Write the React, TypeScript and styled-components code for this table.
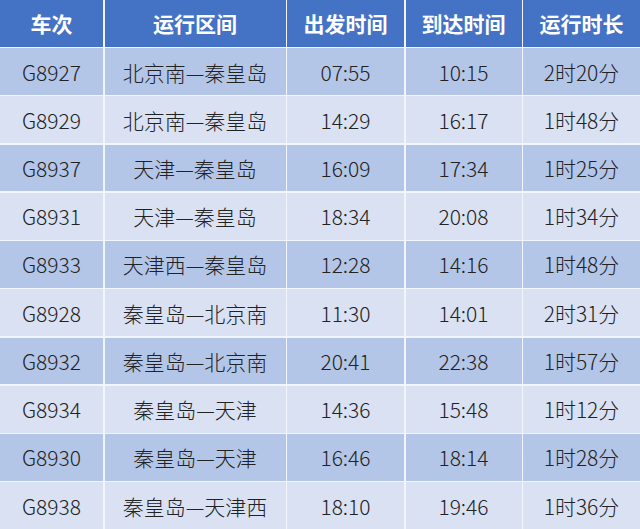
import React from 'react';
import styled, { createGlobalStyle } from 'styled-components';

const GlobalStyle = createGlobalStyle`
  html, body {
    margin: 0;
    padding: 0;
    background: #ffffff;
  }
`;

const COLUMNS = ['车次', '运行区间', '出发时间', '到达时间', '运行时长'];

const TRAINS = [
  ['G8927', '北京南—秦皇岛', '07:55', '10:15', '2时20分'],
  ['G8929', '北京南—秦皇岛', '14:29', '16:17', '1时48分'],
  ['G8937', '天津—秦皇岛', '16:09', '17:34', '1时25分'],
  ['G8931', '天津—秦皇岛', '18:34', '20:08', '1时34分'],
  ['G8933', '天津西—秦皇岛', '12:28', '14:16', '1时48分'],
  ['G8928', '秦皇岛—北京南', '11:30', '14:01', '2时31分'],
  ['G8932', '秦皇岛—北京南', '20:41', '22:38', '1时57分'],
  ['G8934', '秦皇岛—天津', '14:36', '15:48', '1时12分'],
  ['G8930', '秦皇岛—天津', '16:46', '18:14', '1时28分'],
  ['G8938', '秦皇岛—天津西', '18:10', '19:46', '1时36分'],
];

const Table = styled.div`
  width: 640px;
  height: 529px;
  display: grid;
  grid-template-columns: 103px 181px 117px 116px 1fr;
  grid-template-rows: repeat(11, 1fr);
  gap: 1.5px;
  background: #f2f5fb;
  font-family: 'Noto Sans CJK SC', 'Noto Sans', sans-serif;
`;

const HeadCell = styled.div`
  display: flex;
  align-items: center;
  justify-content: center;
  background: #4472c4;
  color: #ffffff;
  font-size: 21px;
  font-weight: 700;
`;

const Cell = styled.div<{ $dark: boolean }>`
  display: flex;
  align-items: center;
  justify-content: center;
  background: ${({ $dark }) => ($dark ? '#b4c6e7' : '#d9e1f2')};
  color: #222222;
  font-size: 21px;
  font-weight: 300;
`;

export default function App() {
  return (
    <>
      <GlobalStyle />
      <Table>
        {COLUMNS.map((c) => (
          <HeadCell key={c}>{c}</HeadCell>
        ))}
        {TRAINS.map((row, i) =>
          row.map((v, j) => (
            <Cell key={`${i}-${j}`} $dark={i % 2 === 0}>
              {v}
            </Cell>
          ))
        )}
      </Table>
    </>
  );
}
